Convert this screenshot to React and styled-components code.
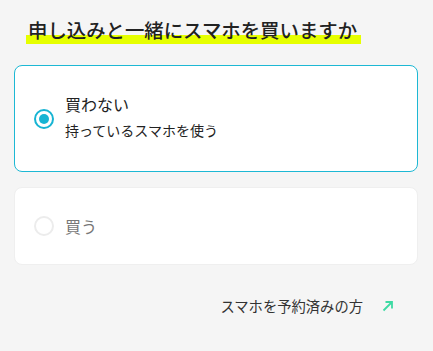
import React, { useState } from 'react';
import styled, { createGlobalStyle } from 'styled-components';

const GlobalStyle = createGlobalStyle`
  body {
    margin: 0;
    background: #f5f5f5;
    font-family: "Noto Sans CJK JP", "Noto Sans", sans-serif;
    color: #222;
  }
`;

const Page = styled.div`
  padding: 16px 15px 0 14px;
`;

const Heading = styled.h2`
  margin: 0 0 21px;
  padding-left: 12px;
  font-size: 19.4px;
  font-weight: 500;
  line-height: 28px;
`;

const Marker = styled.span`
  display: inline-block;
  padding: 0 4px 0 2px;
  background: linear-gradient(transparent 68%, #e6ff00 68%);
`;

const Options = styled.div`
  display: flex;
  flex-direction: column;
  gap: 15px;
`;

const OptionCard = styled.label`
  display: flex;
  align-items: center;
  gap: 11px;
  box-sizing: border-box;
  height: ${(props) => props.$height}px;
  padding: 0 19px;
  background: #fff;
  border: 1px solid ${(props) => (props.$checked ? '#1db8d4' : '#efefef')};
  border-radius: 8px;
  cursor: pointer;
`;

const Radio = styled.span`
  flex: none;
  display: flex;
  align-items: center;
  justify-content: center;
  box-sizing: border-box;
  width: 20px;
  height: 20px;
  border-radius: 50%;
  border: 2px solid ${(props) => (props.$checked ? '#17b4d3' : '#ececec')};

  &::after {
    content: '';
    display: ${(props) => (props.$checked ? 'block' : 'none')};
    width: 10px;
    height: 10px;
    border-radius: 50%;
    background: #17b4d3;
  }
`;

const OptionText = styled.div`
  display: flex;
  flex-direction: column;
  gap: 5px;
  padding-bottom: ${(props) => (props.$hasNote ? 4 : 1)}px;
`;

const OptionTitle = styled.span`
  font-size: 16px;
  line-height: 22px;
  color: ${(props) => (props.$checked ? '#222' : '#777')};
`;

const OptionNote = styled.span`
  font-size: 14px;
  line-height: 20px;
  color: #222;
`;

const LinkRow = styled.div`
  display: flex;
  justify-content: flex-end;
  padding: 31px 24px 0 0;
`;

const Link = styled.a`
  display: flex;
  align-items: center;
  gap: 19px;
  font-size: 14.3px;
  line-height: 20px;
  color: #333;
  text-decoration: none;
`;

const options = [
  { id: 'keep', title: '買わない', note: '持っているスマホを使う', height: 107 },
  { id: 'buy', title: '買う', height: 78 },
];

function ArrowIcon() {
  return (
    <svg width="12" height="12" viewBox="0 0 12 12" fill="none">
      <path d="M1.5 10.5 L10 2 M3.5 2 H10 V8.5" stroke="#3ddaa3" strokeWidth="1.8" />
    </svg>
  );
}

export default function App() {
  const [selected, setSelected] = useState('keep');

  return (
    <>
      <GlobalStyle />
      <Page>
        <Heading>
          <Marker>申し込みと一緒にスマホを買いますか</Marker>
        </Heading>
        <Options>
          {options.map((opt) => {
            const checked = selected === opt.id;
            return (
              <OptionCard
                key={opt.id}
                $checked={checked}
                $height={opt.height}
                onClick={() => setSelected(opt.id)}
              >
                <Radio $checked={checked} />
                <OptionText $hasNote={!!opt.note}>
                  <OptionTitle $checked={checked}>{opt.title}</OptionTitle>
                  {opt.note && <OptionNote>{opt.note}</OptionNote>}
                </OptionText>
              </OptionCard>
            );
          })}
        </Options>
        <LinkRow>
          <Link href="#">
            スマホを予約済みの方
            <ArrowIcon />
          </Link>
        </LinkRow>
      </Page>
    </>
  );
}
